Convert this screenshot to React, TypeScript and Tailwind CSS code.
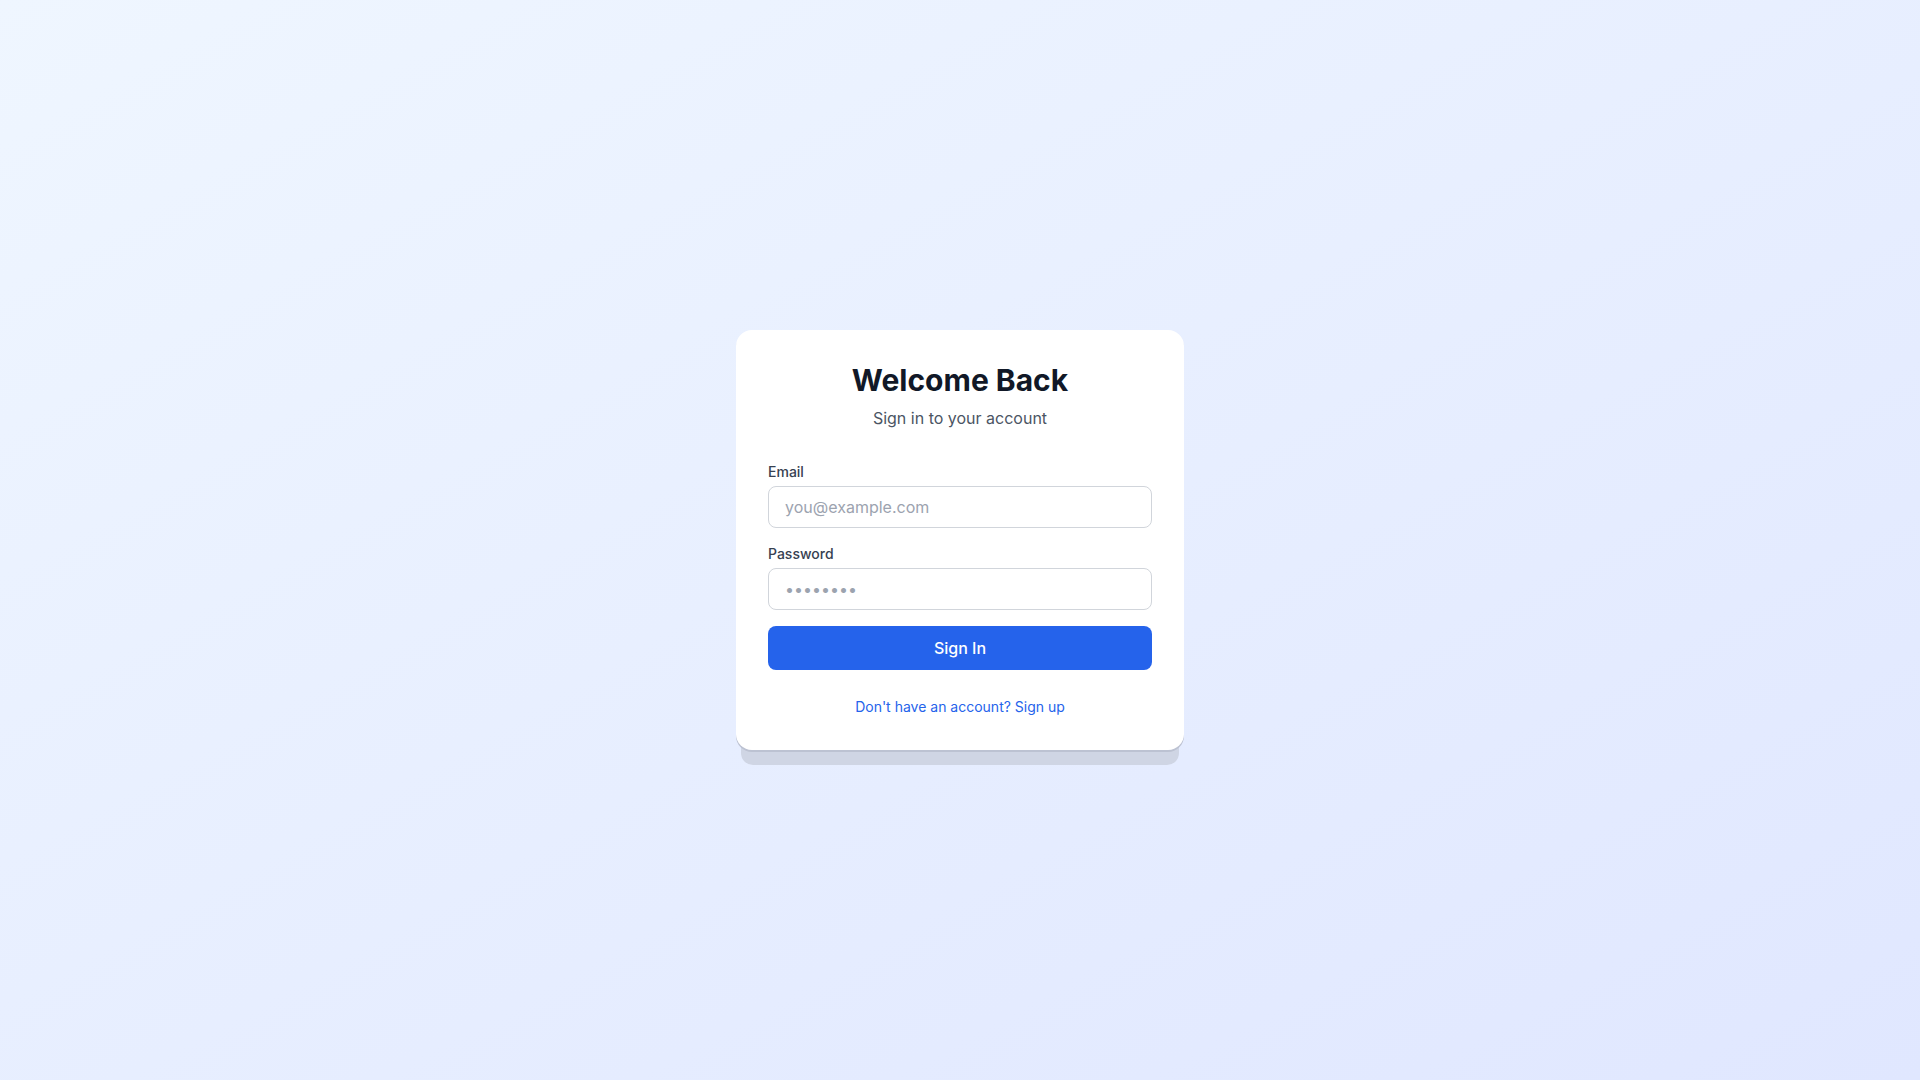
export default function App() {
  return (
    <div
      className="min-h-screen w-full flex items-center justify-center bg-gradient-to-br from-[#eff6ff] to-[#e0e7ff]"
      style={{ fontFamily: 'Inter, "Noto Sans", sans-serif' }}
    >
      <div className="relative w-[448px]">
        {/* stacked sheet behind the card */}
        <div className="absolute left-[5px] right-[5px] -bottom-[15px] h-[40px] rounded-b-xl bg-[#cfd5e4]" />
        <div className="relative bg-white rounded-2xl shadow-[0_2px_0_0_#bcc2d2] px-8 pt-[30px] pb-8">
          <div className="text-center mb-[30px]">
            <h1 className="text-3xl leading-10 font-bold text-[#111827]">Welcome Back</h1>
            <p className="text-base text-[#4b5563] mt-1.5">Sign in to your account</p>
          </div>

          <form className="space-y-[14px]" onSubmit={e => e.preventDefault()}>
            <div>
              <label className="block text-sm font-medium text-[#374151] pt-0.5 mb-1">Email</label>
              <input
                type="email"
                placeholder="you@example.com"
                className="w-full h-[42px] text-base border border-[#d1d5db] rounded-lg px-4 placeholder:text-[#9ca3af] focus:outline-none focus:ring-2 focus:ring-blue-300"
              />
            </div>
            <div>
              <label className="block text-sm font-medium text-[#374151] pt-0.5 mb-1">Password</label>
              <input
                type="password"
                placeholder="••••••••"
                className="w-full h-[42px] text-base border border-[#d1d5db] rounded-lg px-4 placeholder:text-[#9ca3af] focus:outline-none focus:ring-2 focus:ring-blue-300"
              />
            </div>
            <div className="pt-0.5">
              <button
                type="submit"
                className="w-full h-[44px] bg-[#2563eb] text-white text-base font-medium rounded-lg hover:bg-[#1d4ed8] transition"
              >
                Sign In
              </button>
            </div>
          </form>

          <p className="text-center mt-6">
            <a href="#" className="text-sm text-[#2563eb] hover:text-[#1d4ed8]">
              Don't have an account? Sign up
            </a>
          </p>
        </div>
      </div>
    </div>
  )
}
